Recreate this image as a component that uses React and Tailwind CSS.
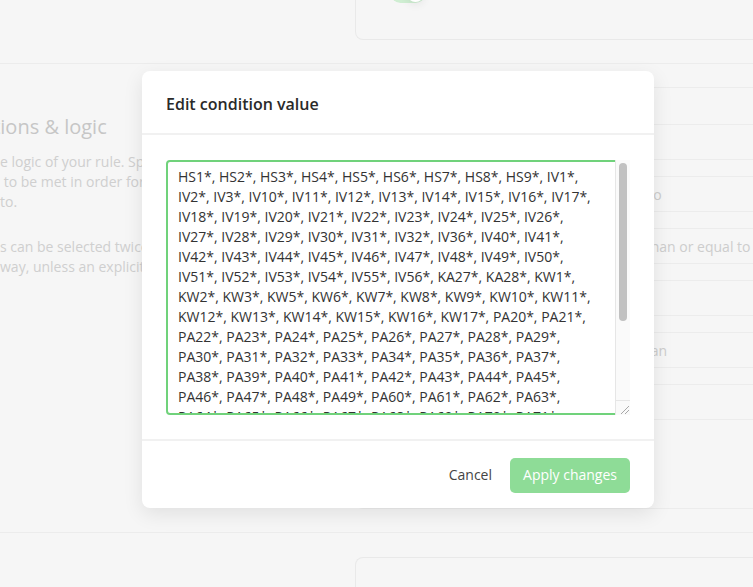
const valueLines = [
  "HS1*, HS2*, HS3*, HS4*, HS5*, HS6*, HS7*, HS8*, HS9*, IV1*,",
  "IV2*, IV3*, IV10*, IV11*, IV12*, IV13*, IV14*, IV15*, IV16*, IV17*,",
  "IV18*, IV19*, IV20*, IV21*, IV22*, IV23*, IV24*, IV25*, IV26*,",
  "IV27*, IV28*, IV29*, IV30*, IV31*, IV32*, IV36*, IV40*, IV41*,",
  "IV42*, IV43*, IV44*, IV45*, IV46*, IV47*, IV48*, IV49*, IV50*,",
  "IV51*, IV52*, IV53*, IV54*, IV55*, IV56*, KA27*, KA28*, KW1*,",
  "KW2*, KW3*, KW5*, KW6*, KW7*, KW8*, KW9*, KW10*, KW11*,",
  "KW12*, KW13*, KW14*, KW15*, KW16*, KW17*, PA20*, PA21*,",
  "PA22*, PA23*, PA24*, PA25*, PA26*, PA27*, PA28*, PA29*,",
  "PA30*, PA31*, PA32*, PA33*, PA34*, PA35*, PA36*, PA37*,",
  "PA38*, PA39*, PA40*, PA41*, PA42*, PA43*, PA44*, PA45*,",
  "PA46*, PA47*, PA48*, PA49*, PA60*, PA61*, PA62*, PA63*,",
  "PA64*, PA65*, PA66*, PA67*, PA68*, PA69*, PA70*, PA71*,",
];

function Row({ text, pad = "pl-[242px]" }) {
  return (
    <div className={`flex h-[35px] items-center border-b border-[#ececec] ${pad} pt-px text-sm whitespace-nowrap text-[#cdcdcd]`}>
      {text}
    </div>
  );
}

function Strip() {
  return <div className="h-[17px] border-b border-[#ececec]" />;
}

export default function App() {
  return (
    <div className="relative h-[587px] w-[753px] overflow-hidden bg-[#f6f6f6] font-['Open_Sans',sans-serif]">
      {/* top section */}
      <div className="h-[64px] border-b border-[#ececec] pl-[355px]">
        <div className="flex h-[40px] items-start rounded-bl-lg border-b border-l border-[#e9e9e9]">
          <div className="relative -mt-[16px] ml-[35px] h-[19px] w-[34px] rounded-full bg-[#cfeed2]">
            <div className="absolute right-[1px] top-[1px] h-[17px] w-[17px] rounded-full bg-white shadow-[0_3px_8px_rgba(0,0,0,0.07)]" />
          </div>
        </div>
      </div>

      {/* middle section */}
      <div className="flex h-[469px] border-b border-[#ececec]">
        <div className="w-[355px] shrink-0 pt-[49px]">
          <div className="-ml-[61px] whitespace-nowrap text-xl leading-7 text-[#c6c6c6]">
            Conditions &amp; logic
          </div>
          <div className="mt-[11px] whitespace-pre text-sm leading-5 text-[#cfcfcf]">
            <div>e logic of your rule. Specify which conditions</div>
            <div> to be met in order for the rule to apply</div>
            <div>to.</div>
          </div>
          <div className="mt-[25px] whitespace-pre text-sm leading-5 text-[#cfcfcf]">
            <div>s can be selected twice in the same</div>
            <div>way, unless an explicit combination</div>
          </div>
        </div>
        <div className="flex-1 pt-[23px]">
          <div className="h-[422px] rounded-l-lg border border-r-0 border-[#ececec]">
            <div className="h-[37px] border-b border-[#ececec]" />
            <Row text="Is" />
            <Strip />
            <Row text="Is equal to" pad="pl-[238px]" />
            <Strip />
            <Row text="Greater than or equal to" pad="pl-[236px]" />
            <Strip />
            <Row text="Is not" />
            <Strip />
            <Row text="Less than" pad="pl-[249px]" />
            <Strip />
            <Row text="Not in" />
          </div>
        </div>
      </div>

      {/* bottom section */}
      <div className="pl-[355px] pt-[24px]">
        <div className="h-[60px] rounded-tl-lg border-l border-t border-[#e9e9e9]" />
      </div>

      {/* modal */}
      <div className="absolute left-[142px] top-[71px] flex h-[437px] w-[512px] flex-col rounded-lg bg-white shadow-[0_6px_20px_rgba(0,0,0,0.09)]">
        <div className="flex h-[64px] shrink-0 items-center border-b-2 border-[#f1f1f1] px-6 pt-[3px]">
          <h2 className="text-base font-semibold text-[#2a2a2a]">Edit condition value</h2>
        </div>
        <div className="px-6 pb-[24px] pt-[25px]">
          <div className="relative h-[255px] rounded-[4px] border-2 border-[#70d27b]">
            <div className="h-full overflow-hidden pl-[10px] pt-[5px] text-sm leading-5 text-[#333333]">
              {valueLines.map((l, i) => (
                <div key={i} className="whitespace-pre">{l}</div>
              ))}
            </div>
            <div className="absolute -right-[2px] -top-[2px] bottom-[13px] w-[15px] border-l border-[#e6e6e6] bg-[#fafafa]">
              <div className="ml-[3px] mt-[3px] h-[158px] w-[8px] rounded-full bg-[#c1c1c1]" />
            </div>
            <div className="absolute -bottom-[2px] -right-[2px] h-[15px] w-[15px] border-l border-t border-[#e6e6e6] bg-[#fafafa]">
              <svg width="14" height="14" viewBox="0 0 14 14" className="block">
                <line x1="13" y1="5" x2="5" y2="13" stroke="#a8a8a8" strokeWidth="1" />
                <line x1="13" y1="9" x2="9" y2="13" stroke="#a8a8a8" strokeWidth="1" />
              </svg>
            </div>
          </div>
        </div>
        <div className="flex flex-1 items-center justify-end gap-[18px] border-t-2 border-[#f1f1f1] px-6 pt-px">
          <button className="text-sm text-[#444444]">Cancel</button>
          <button className="h-[35px] rounded-[5px] bg-[#8edc97] px-[13px] text-sm text-white">
            Apply changes
          </button>
        </div>
      </div>
    </div>
  );
}
